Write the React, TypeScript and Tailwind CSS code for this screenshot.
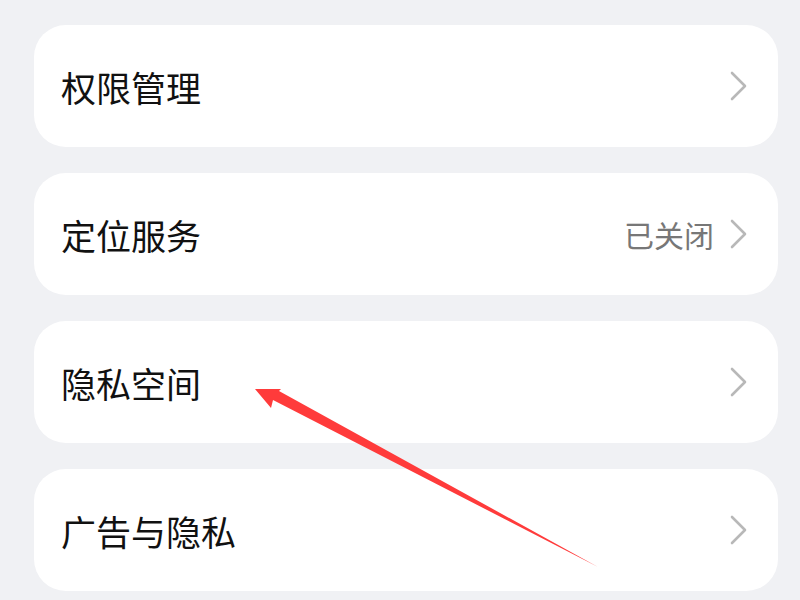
import React from "react";

type Row = { label: string; value?: string };

const rows: Row[] = [
  { label: "权限管理" },
  { label: "定位服务", value: "已关闭" },
  { label: "隐私空间" },
  { label: "广告与隐私" },
];

function Chevron() {
  return (
    <svg width="18" height="30" viewBox="0 0 18 30" fill="none" aria-hidden="true">
      <path d="M2 2 L15 15 L2 28" stroke="#b8b8b8" strokeWidth="2.6" strokeLinecap="round" strokeLinejoin="round" />
    </svg>
  );
}

export default function App() {
  return (
    <div
      className="relative w-[800px] h-[600px] overflow-hidden bg-[#f0f1f4]"
      style={{ fontFamily: '"Noto Sans CJK SC", "Noto Sans", sans-serif' }}
    >
      <div className="flex flex-col gap-[26px] pt-[25px] pl-[34px] pr-[22px]">
        {rows.map((row) => (
          <div
            key={row.label}
            className="h-[122px] bg-white rounded-[32px] flex items-center justify-between pl-[27px] pr-[30px]"
          >
            <span className="text-[35px] leading-none text-[#111111]">{row.label}</span>
            <div className="flex items-center gap-[16px]">
              {row.value && (
                <span className="text-[30px] leading-none text-[#777777]">{row.value}</span>
              )}
              <Chevron />
            </div>
          </div>
        ))}
      </div>

      {/* annotation arrow */}
      <svg className="absolute left-0 top-0" width="800" height="600" viewBox="0 0 800 600" aria-hidden="true">
        <polygon points="598,567 279,391 281,389 255,389 271,408 273,400 598,567" fill="#ff3b3b" />
      </svg>
    </div>
  );
}
